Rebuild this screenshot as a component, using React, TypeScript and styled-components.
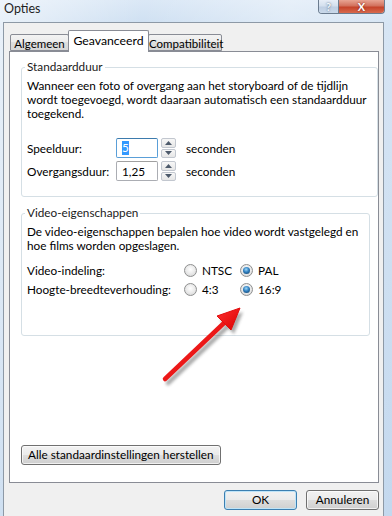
import React from 'react';
import styled, { createGlobalStyle, css } from 'styled-components';

const GlobalStyle = createGlobalStyle`
  html, body {
    margin: 0;
    padding: 0;
    background: #c7dbef;
  }
  body {
    font-family: Lato, "Liberation Sans", sans-serif;
    font-size: 11.75px;
    color: #000;
  }
`;

const Window = styled.div`
  position: relative;
  width: 392px;
  height: 516px;
  overflow: hidden;
  display: flex;
  flex-direction: column;
  background:
    linear-gradient(100deg, rgba(255, 255, 255, 0.55) 0%, rgba(255, 255, 255, 0) 30%, rgba(255, 255, 255, 0.35) 60%, rgba(255, 255, 255, 0) 100%),
    linear-gradient(180deg, #dbe8f6 0px, #cfe0f2 24px, #c3d8ee 100%);
`;

const TitleBar = styled.div`
  height: 22px;
  display: flex;
  align-items: flex-start;
  justify-content: space-between;
  padding: 0 7px 0 4px;
  box-sizing: border-box;
`;

const Title = styled.span`
  line-height: 18px;
  font-size: 12.5px;
  color: #1e1e1e;
`;

const CaptionButtons = styled.div`
  display: flex;
  border: 1px solid #6b7c8f;
  border-top: none;
  border-radius: 0 0 4px 4px;
  overflow: hidden;
  height: 14px;
  box-sizing: border-box;
`;

const CaptionButton = styled.div<{ $close?: boolean }>`
  width: ${p => (p.$close ? 45 : 19)}px;
  display: flex;
  align-items: center;
  justify-content: center;
  color: #fff;
  font-size: 11px;
  font-weight: bold;
  line-height: 12px;
  ${p => p.$close
    ? css`
      background: linear-gradient(180deg, #e8a493 0%, #d2715d 45%, #c5432a 55%, #d86a4e 100%);
      text-shadow: 0 0 2px #7a1a0a;
    `
    : css`
      background: linear-gradient(180deg, #e7eef7 0%, #d4e0ee 45%, #bfcfe3 55%, #cad9ea 100%);
      border-right: 1px solid #6b7c8f;
      color: #f4f8fc;
      text-shadow: 0 0 2px #3d5470;
    `}
`;

const Client = styled.div`
  flex: 1;
  margin: 0 8px 0 3px;
  background: #f0f0f0;
  border: 1px solid #8d99a6;
  border-bottom: none;
  padding: 7px 4px 0 5px;
  display: flex;
  flex-direction: column;
`;

const TabRow = styled.div`
  display: flex;
  align-items: flex-end;
  padding-left: 1px;
  position: relative;
  z-index: 1;
  white-space: nowrap;
`;

const Tab = styled.div<{ $active?: boolean; $width: number }>`
  box-sizing: border-box;
  width: ${p => p.$width}px;
  text-align: center;
  border: 1px solid #898c95;
  border-radius: 2px 2px 0 0;
  line-height: 15px;
  ${p => p.$active
    ? css`
      position: relative;
      height: 22px;
      padding-top: 2px;
      margin-bottom: -1px;
      background: #fff;
      border-bottom: none;
      font-size: 12.25px;
    `
    : css`
      height: 17px;
      padding-top: 1px;
      font-size: 11.5px;
      background: linear-gradient(180deg, #f3f3f3 0%, #ebebeb 50%, #dedede 50%, #d6d6d6 100%);
    `}
  & + & { margin-left: -1px; }
`;

const Panel = styled.div`
  box-sizing: border-box;
  height: 432px;
  width: 370px;
  background: #fff;
  border: 1px solid #898c95;
  padding: 8px 8px 17px 11px;
  display: flex;
  flex-direction: column;
`;

const Group = styled.fieldset<{ $padBottom: number }>`
  margin: 0;
  border: 1px solid #d5dfe5;
  border-radius: 3px;
  padding: 5px 10px ${p => p.$padBottom}px 5px;
  & + & { margin-top: 9px; }
`;

const Legend = styled.legend`
  padding: 0 2px;
  margin-left: -2px;
  line-height: 14px;
  color: #1b1b1b;
`;

const Description = styled.p`
  margin: 0;
  line-height: 14px;
  white-space: nowrap;
`;

const DurationRows = styled.div`
  margin-top: 17px;
  display: flex;
  flex-direction: column;
  gap: 3px;
`;

const DurationRow = styled.div`
  display: flex;
  align-items: center;
  height: 20px;
  white-space: nowrap;
`;

const RowLabel = styled.span<{ $width: number }>`
  width: ${p => p.$width}px;
  flex: none;
`;

const SpinInput = styled.div<{ $focused?: boolean }>`
  box-sizing: border-box;
  width: 42px;
  height: 20px;
  border: 1px solid ${p => (p.$focused ? '#5a9fd8' : '#abadb3')};
  border-top-color: ${p => (p.$focused ? '#3d7bad' : '#a0a0a0')};
  border-radius: 2px;
  padding: 0 5px;
  display: flex;
  align-items: center;
  background: #fff;
`;

const Selected = styled.span`
  background: #3399ff;
  color: #fff;
  line-height: 14px;
`;

const Spinner = styled.div`
  width: 15px;
  height: 20px;
  margin-left: 3px;
  display: flex;
  flex-direction: column;
  gap: 1px;
`;

const SpinButton = styled.div`
  flex: 1;
  box-sizing: border-box;
  border: 1px solid #c2c7cf;
  border-radius: 2px;
  background: linear-gradient(180deg, #f7f7f7 0%, #e6e6e6 100%);
  display: flex;
  align-items: center;
  justify-content: center;
`;

const Unit = styled.span`
  margin-left: 10px;
`;

const VideoGrid = styled.div`
  margin-top: 8px;
  display: grid;
  grid-template-columns: 157px 56px auto;
  grid-auto-rows: 19px;
  align-items: center;
  white-space: nowrap;
`;

const RadioOption = styled.label`
  display: flex;
  align-items: center;
  gap: 5px;
`;

const RadioCircle = styled.span<{ $checked?: boolean }>`
  width: 13px;
  height: 13px;
  box-sizing: border-box;
  border-radius: 50%;
  border: 1px solid #8e8f8f;
  background: radial-gradient(circle at 50% 40%, #ffffff 0%, #e8e8e8 55%, #cfcfcf 100%);
  display: flex;
  align-items: center;
  justify-content: center;
  &::after {
    content: '';
    display: ${p => (p.$checked ? 'block' : 'none')};
    width: 7px;
    height: 7px;
    border-radius: 50%;
    background: radial-gradient(circle at 45% 35%, #9fd8f8 0%, #2f7fc0 45%, #10395c 100%);
  }
`;

const Button = styled.button<{ $default?: boolean }>`
  box-sizing: border-box;
  height: 20px;
  padding: 0 6px;
  font-family: inherit;
  font-size: 11.75px;
  line-height: 16px;
  color: #000;
  white-space: nowrap;
  border: 1px solid ${p => (p.$default ? '#3c7fb1' : '#707070')};
  border-radius: 3px;
  background: linear-gradient(180deg, #f2f2f2 0%, #ebebeb 48%, #dddddd 52%, #cfcfcf 100%);
  box-shadow: inset 0 0 0 1px ${p => (p.$default ? '#bfe4f8' : 'rgba(255,255,255,0.7)')};
  cursor: default;
`;

const ResetButton = styled(Button)`
  margin-top: auto;
  align-self: flex-start;
  padding: 0 6px;
`;

const Footer = styled.div`
  display: flex;
  justify-content: flex-end;
  gap: 9px;
  margin-top: 7px;
  width: 370px;
`;

const DialogButton = styled(Button)`
  width: 73px;
`;

const ArrowOverlay = styled.svg`
  position: absolute;
  left: 150px;
  top: 298px;
  width: 100px;
  height: 95px;
  pointer-events: none;
`;

const Triangle: React.FC<{ up?: boolean }> = ({ up }) => (
  <svg width="7" height="4" viewBox="0 0 7 4">
    <path d={up ? 'M0 4 L3.5 0 L7 4 Z' : 'M0 0 L3.5 4 L7 0 Z'} fill="#4d5a6b" />
  </svg>
);

const SpinBox: React.FC<{ value: React.ReactNode; focused?: boolean }> = ({ value, focused }) => (
  <>
    <SpinInput $focused={focused}>{value}</SpinInput>
    <Spinner>
      <SpinButton><Triangle up /></SpinButton>
      <SpinButton><Triangle /></SpinButton>
    </Spinner>
  </>
);

const Radio: React.FC<{ label: string; checked?: boolean }> = ({ label, checked }) => (
  <RadioOption>
    <RadioCircle $checked={checked} />
    <span>{label}</span>
  </RadioOption>
);

const Arrow = () => (
  <ArrowOverlay viewBox="0 0 100 95">
    <defs>
      <filter id="arrowShadow" x="-20%" y="-20%" width="140%" height="140%">
        <feGaussianBlur stdDeviation="1.5" />
      </filter>
      <linearGradient id="arrowFill" x1="0" y1="0" x2="1" y2="1">
        <stop offset="0" stopColor="#ff3030" />
        <stop offset="1" stopColor="#d90000" />
      </linearGradient>
    </defs>
    <g transform="translate(3 4)" opacity="0.45" filter="url(#arrowShadow)">
      <line x1="15" y1="81" x2="74" y2="25" stroke="#444" strokeWidth="4.5" strokeLinecap="round" />
      <path d="M90 10 L81 32 L67 18 Z" fill="#444" />
    </g>
    <line x1="15" y1="81" x2="74" y2="25" stroke="url(#arrowFill)" strokeWidth="4.5" strokeLinecap="round" />
    <path d="M90 10 L81 32 L67 18 Z" fill="url(#arrowFill)" stroke="#e30c0c" strokeWidth="1" strokeLinejoin="round" />
  </ArrowOverlay>
);

export default function App() {
  return (
    <>
      <GlobalStyle />
      <Window>
        <TitleBar>
          <Title>Opties</Title>
          <CaptionButtons>
            <CaptionButton>?</CaptionButton>
            <CaptionButton $close>X</CaptionButton>
          </CaptionButtons>
        </TitleBar>
        <Client>
          <TabRow>
            <Tab $width={59}>Algemeen</Tab>
            <Tab $active $width={81}>Geavanceerd</Tab>
            <Tab $width={74}>Compatibiliteit</Tab>
          </TabRow>
          <Panel>
            <Group $padBottom={15}>
              <Legend>Standaardduur</Legend>
              <Description>
                Wanneer een foto of overgang aan het storyboard of de tijdlijn<br />
                wordt toegevoegd, wordt daaraan automatisch een standaardduur<br />
                toegekend.
              </Description>
              <DurationRows>
                <DurationRow>
                  <RowLabel $width={89}>Speelduur:</RowLabel>
                  <SpinBox focused value={<Selected>5</Selected>} />
                  <Unit>seconden</Unit>
                </DurationRow>
                <DurationRow>
                  <RowLabel $width={89}>Overgangsduur:</RowLabel>
                  <SpinBox value="1,25" />
                  <Unit>seconden</Unit>
                </DurationRow>
              </DurationRows>
            </Group>
            <Group $padBottom={36}>
              <Legend>Video-eigenschappen</Legend>
              <Description>
                De video-eigenschappen bepalen hoe video wordt vastgelegd en<br />
                hoe films worden opgeslagen.
              </Description>
              <VideoGrid>
                <span>Video-indeling:</span>
                <Radio label="NTSC" />
                <Radio label="PAL" checked />
                <span>Hoogte-breedteverhouding:</span>
                <Radio label="4:3" />
                <Radio label="16:9" checked />
              </VideoGrid>
            </Group>
            <ResetButton>Alle standaardinstellingen herstellen</ResetButton>
          </Panel>
          <Footer>
            <DialogButton $default>OK</DialogButton>
            <DialogButton>Annuleren</DialogButton>
          </Footer>
        </Client>
        <Arrow />
      </Window>
    </>
  );
}
